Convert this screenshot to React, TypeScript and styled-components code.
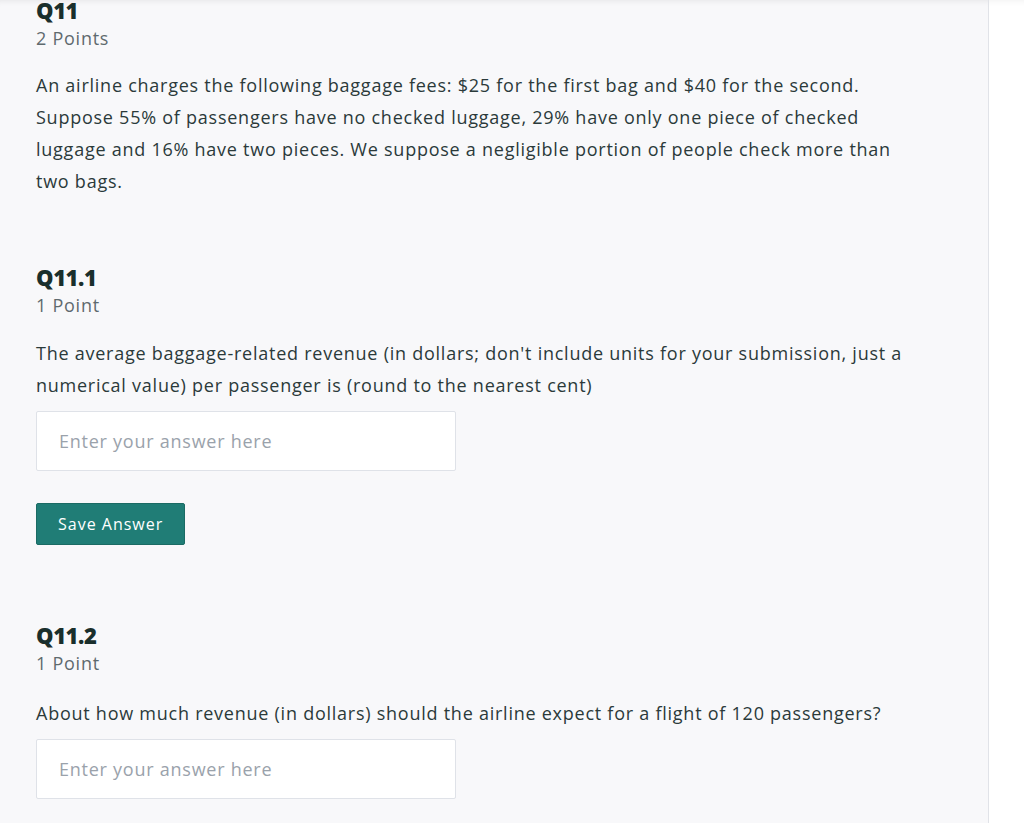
import React from 'react';
import styled, { createGlobalStyle } from 'styled-components';

const GlobalStyle = createGlobalStyle`
  html, body {
    margin: 0;
    padding: 0;
    background: #ffffff;
    font-family: "Open Sans", "Noto Sans", sans-serif;
  }
`;

const Page = styled.div`
  display: flex;
  height: 823px;
  overflow: hidden;
`;

const Main = styled.main`
  width: 988px;
  flex-shrink: 0;
  background: #f8f8fa;
  border-right: 1px solid #e1e3e8;
  box-shadow: inset 0 7px 6px -6px rgba(0, 0, 0, 0.08);
  overflow: hidden;
`;

const Side = styled.aside`
  flex: 1;
  background: #ffffff;
  box-shadow: inset 0 7px 6px -6px rgba(0, 0, 0, 0.06);
`;

const Scroller = styled.div`
  margin-top: -5px;
  padding: 0 36px;
`;

const Question = styled.section<{ $gap: number }>`
  margin-bottom: ${(p) => p.$gap}px;
`;

const Title = styled.h2`
  margin: 0;
  font-size: 22px;
  line-height: 30px;
  font-weight: 800;
  letter-spacing: -0.4px;
  color: #1a2f2c;
`;

const Points = styled.div`
  font-size: 18px;
  line-height: 26px;
  letter-spacing: 0.75px;
  color: #5f6a6e;
`;

const Prompt = styled.p<{ $top: number }>`
  max-width: 890px;
  margin: ${(p) => p.$top}px 0 0;
  font-size: 18px;
  line-height: 32px;
  letter-spacing: 0.75px;
  color: #2b3a3a;
`;

const AnswerInput = styled.input`
  display: block;
  box-sizing: border-box;
  width: 420px;
  height: 60px;
  margin-top: 10px;
  padding: 0 22px;
  border: 1px solid #dfe2e8;
  border-radius: 2px;
  background: #ffffff;
  font-family: inherit;
  font-size: 18px;
  letter-spacing: 0.75px;
  color: #2b3a3a;
  outline: none;

  &::placeholder {
    color: #9aa2ab;
  }
`;

const SaveButton = styled.button`
  display: block;
  box-sizing: border-box;
  height: 42px;
  margin-top: 32px;
  padding: 0 21px;
  border: 1px solid #1b6b64;
  border-radius: 2px;
  background: #207d76;
  color: #ffffff;
  font-family: inherit;
  font-size: 16px;
  letter-spacing: 1px;
  cursor: pointer;
`;

export default function App() {
  return (
    <>
      <GlobalStyle />
      <Page>
        <Main>
          <Scroller>
            <Question $gap={65}>
              <Title>Q11</Title>
              <Points>2 Points</Points>
              <Prompt $top={18}>
                An airline charges the following baggage fees: $25 for the first bag and $40 for the
                second. Suppose 55% of passengers have no checked luggage, 29% have only one piece of
                checked luggage and 16% have two pieces. We suppose a negligible portion of people
                check more than two bags.
              </Prompt>
            </Question>
            <Question $gap={75}>
              <Title>Q11.1</Title>
              <Points>1 Point</Points>
              <Prompt $top={19}>
                The average baggage-related revenue (in dollars; don't include units for your
                submission, just a numerical value) per passenger is (round to the nearest cent)
              </Prompt>
              <AnswerInput placeholder="Enter your answer here" />
              <SaveButton>Save Answer</SaveButton>
            </Question>
            <Question $gap={40}>
              <Title>Q11.2</Title>
              <Points>1 Point</Points>
              <Prompt $top={21}>
                About how much revenue (in dollars) should the airline expect for a flight of 120
                passengers?
              </Prompt>
              <AnswerInput placeholder="Enter your answer here" />
            </Question>
          </Scroller>
        </Main>
        <Side />
      </Page>
    </>
  );
}
